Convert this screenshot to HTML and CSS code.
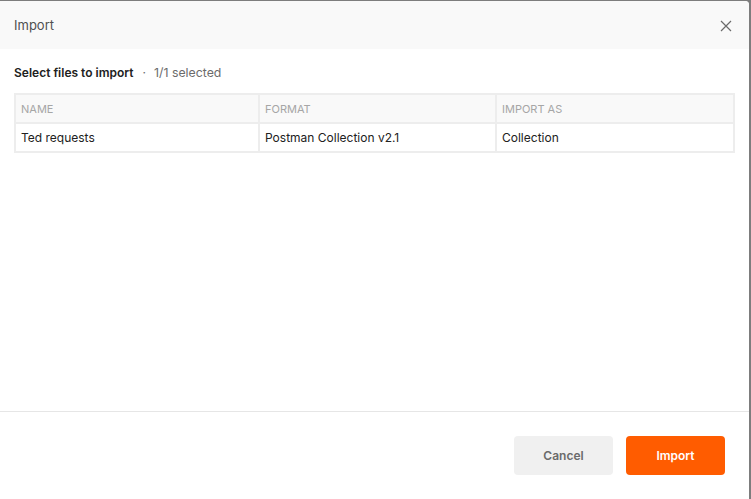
FILE: index.html
```html
<!DOCTYPE html>
<html>
<head>
<meta charset="utf-8">
<link rel="stylesheet" href="styles.css">
</head>
<body>
<div class="dialog">
  <div class="header">
    <span class="title">Import</span>
    <button class="close" aria-label="Close">
      <svg width="12" height="12" viewBox="0 0 12 12"><path d="M1 1L11 11M11 1L1 11" stroke="#6b6b6b" stroke-width="1.2" fill="none"/></svg>
    </button>
  </div>
  <div class="body">
    <div class="subtitle"><strong>Select files to import</strong><span class="dot">·</span><span class="count">1/1 selected</span></div>
    <table class="files">
      <colgroup><col class="c1"><col class="c2"><col class="c3"></colgroup>
      <thead>
        <tr><th>NAME</th><th>FORMAT</th><th>IMPORT AS</th></tr>
      </thead>
      <tbody>
        <tr><td>Ted requests</td><td>Postman Collection v2.1</td><td>Collection</td></tr>
      </tbody>
    </table>
  </div>
  <div class="footer">
    <button class="btn cancel">Cancel</button>
    <button class="btn primary">Import</button>
  </div>
</div>
</body>
</html>
```

FILE: styles.css
```css
html, body {
  margin: 0;
  padding: 0;
}
body {
  background: #7d7d7d;
  padding-top: 1px;
  height: 498px;
  font-family: Inter, "Noto Sans", sans-serif;
  overflow: hidden;
}
.dialog {
  width: 749px;
  height: 498px;
  background: #fff;
  border-top-right-radius: 4px;
  display: flex;
  flex-direction: column;
  overflow: hidden;
}
.header {
  height: 48px;
  flex: none;
  background: #f9f9f9;
  display: flex;
  align-items: center;
  justify-content: space-between;
  padding: 0 14px 0 14px;
}
.title {
  font-size: 13px;
  color: #505050;
}
.close {
  background: none;
  border: 0;
  padding: 0;
  margin-top: 2px;
  width: 14px;
  height: 14px;
  display: flex;
  align-items: center;
  justify-content: center;
  margin-right: 2px;
}
.body {
  flex: 1;
  padding: 16px 14px 0 14px;
  border-bottom: 1px solid #e6e6e6;
}
.subtitle {
  font-size: 12px;
  line-height: 16px;
  color: #212121;
  display: flex;
  align-items: center;
}
.subtitle strong {
  font-weight: 600;
}
.dot {
  color: #6b6b6b;
  margin: 0 8px 0 9px;
}
.count {
  color: #6b6b6b;
  font-size: 12.3px;
}
.files {
  margin-top: 12px;
  width: 719px;
  border-collapse: collapse;
  font-size: 12px;
  table-layout: fixed;
}
.files th, .files td {
  border: 2px solid #ededed;
  height: 29px;
  padding: 0 5px;
  text-align: left;
  box-sizing: border-box;
}
.files th {
  background: #f9f9f9;
  font-weight: 400;
  font-size: 11px;
  color: #a6a6a6;
}
.files td {
  color: #212121;
}
.c1 { width: 244px; }
.c2 { width: 237px; }
.c3 { width: 238px; }
.footer {
  height: 87px;
  flex: none;
  display: flex;
  align-items: flex-start;
  justify-content: flex-end;
  gap: 13px;
  padding: 24px 24px 0 0;
  box-sizing: border-box;
}
.btn {
  width: 99px;
  height: 39px;
  border: 0;
  border-radius: 4px;
  font-family: Inter, "Noto Sans", sans-serif;
  font-size: 12px;
  font-weight: 600;
}
.cancel {
  background: #f0f0f0;
  color: #6b6b6b;
}
.primary {
  background: #ff5c00;
  color: #fff;
}
```
